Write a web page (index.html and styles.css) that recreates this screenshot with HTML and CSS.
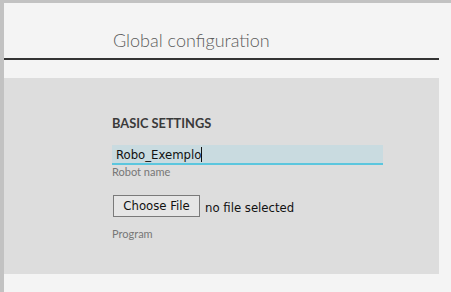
FILE: index.html
```html
<!DOCTYPE html>
<html lang="en">
<head>
    <meta charset="UTF-8">
    <meta name="viewport" content="width=device-width, initial-scale=1.0">
    <title>Global configuration</title>
    <link rel="stylesheet" href="styles.css">
</head>
<body>
    <div class="page">
        <div class="header">
            <h1 class="title">Global configuration</h1>
        </div>
        <div class="panel">
            <h2 class="section">BASIC SETTINGS</h2>
            <div class="field">
                <div class="input">Robo_Exemplo<span class="caret"></span></div>
                <div class="hint">Robot name</div>
            </div>
            <div class="field">
                <div class="file">
                    <span class="file-button">Choose File</span>
                    <span class="file-name">no file selected</span>
                </div>
                <div class="hint">Program</div>
            </div>
        </div>
    </div>
</body>
</html>
```

FILE: styles.css
```css
body {
    margin: 0;
    background-color: #c2c2c2;
    font-family: Lato, "Open Sans", sans-serif;
    padding: 3px 0 0 4px;
    height: 292px;
    box-sizing: border-box;
    overflow: hidden;
}

.page {
    background-color: #f4f4f4;
    height: 100%;
    padding-right: 12px;
}

.header {
    height: 57px;
    border-bottom: 2px solid #333;
    padding-left: 109px;
    box-sizing: border-box;
    display: flex;
    align-items: flex-end;
}

.title {
    margin: 0 0 7px 0;
    font-family: "Lato Light", Lato, sans-serif;
    font-weight: 300;
    font-size: 18px;
    color: #5c5c5c;
    line-height: 22px;
}

.panel {
    margin-top: 18px;
    background-color: #dddddd;
    height: 196px;
    padding: 37px 0 0 108px;
    box-sizing: border-box;
}

.section {
    margin: 0 0 14px 0;
    font-size: 12.8px;
    font-weight: 700;
    color: #3a3a3a;
    line-height: 16px;
}

.field {
    margin-bottom: 16px;
}

.input {
    width: 267px;
    height: 18px;
    background-color: #c9dbe0;
    border-bottom: 2px solid #5bc6de;
    font-family: "DejaVu Sans Condensed", "DejaVu Sans", sans-serif;
    font-size: 13px;
    line-height: 19px;
    color: #111;
    padding-left: 4px;
}

.caret {
    display: inline-block;
    width: 1px;
    height: 15px;
    background-color: #111;
    vertical-align: -3px;
}

.hint {
    font-size: 11px;
    color: #777;
    line-height: 14px;
}

.file {
    display: flex;
    align-items: center;
    gap: 5px;
    margin-bottom: 10px;
    font-family: "DejaVu Sans Condensed", "DejaVu Sans", sans-serif;
    font-size: 13px;
    color: #111;
}

.file-button {
    width: 85px;
    height: 20px;
    border: 1px solid #7a7a7a;
    background-color: #e6e6e6;
    text-align: center;
    line-height: 19px;
    margin-left: 1px;
}

.file-name {
    margin-top: 3px;
}
```
